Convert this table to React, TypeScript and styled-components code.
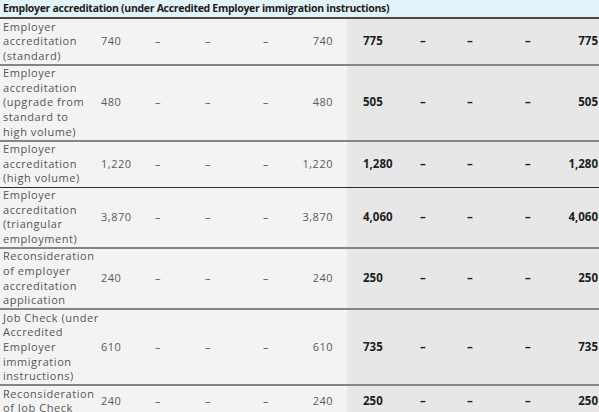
import styled, { createGlobalStyle } from "styled-components";

const GlobalStyle = createGlobalStyle`
  html, body {
    margin: 0;
    padding: 0;
    background: #ffffff;
  }
  body {
    font-family: "Open Sans", "Noto Sans", sans-serif;
    overflow: hidden;
  }
`;

type Fee = {
  label: string[];
  current: string;
  proposed: string;
  dark?: boolean;
};

const fees: Fee[] = [
  { label: ["Employer", "accreditation", "(standard)"], current: "740", proposed: "775" },
  {
    label: ["Employer", "accreditation", "(upgrade from", "standard to", "high volume)"],
    current: "480",
    proposed: "505",
  },
  { label: ["Employer", "accreditation", "(high volume)"], current: "1,220", proposed: "1,280", dark: true },
  {
    label: ["Employer", "accreditation", "(triangular", "employment)"],
    current: "3,870",
    proposed: "4,060",
  },
  {
    label: ["Reconsideration", "of employer", "accreditation", "application"],
    current: "240",
    proposed: "250",
  },
  {
    label: ["Job Check (under", "Accredited", "Employer", "immigration", "instructions)"],
    current: "610",
    proposed: "735",
  },
  { label: ["Reconsideration", "of Job Check"], current: "240", proposed: "250" },
];

const widths = [97, 54, 50, 58, 31, 57, 69, 47, 58, 34, 44];

function App() {
  return (
    <>
      <GlobalStyle />
      <FeeTable>
        <colgroup>
          {widths.map((w, i) => (
            <col key={i} style={{ width: w }} />
          ))}
        </colgroup>
        <thead>
          <tr>
            <SectionHead colSpan={11}>
              Employer accreditation (under Accredited Employer immigration instructions)
            </SectionHead>
          </tr>
        </thead>
        <tbody>
          {fees.map((fee, i) => (
            <tr key={i}>
              <LabelCell $dark={fee.dark}>
                {fee.label.map((l, j) => (
                  <div key={j}>{l}</div>
                ))}
              </LabelCell>
              <OldCell $dark={fee.dark}>{fee.current}</OldCell>
              <OldCell $dark={fee.dark}>–</OldCell>
              <OldCell $dark={fee.dark}>–</OldCell>
              <OldCell $dark={fee.dark}>–</OldCell>
              <OldCell $dark={fee.dark} $right>{fee.current}</OldCell>
              <NewCell $dark={fee.dark} $first>{fee.proposed}</NewCell>
              <NewCell $dark={fee.dark}>–</NewCell>
              <NewCell $dark={fee.dark}>–</NewCell>
              <NewCell $dark={fee.dark}>–</NewCell>
              <NewCell $dark={fee.dark} $right>{fee.proposed}</NewCell>
            </tr>
          ))}
        </tbody>
      </FeeTable>
    </>
  );
}

export default App;

const FeeTable = styled.table`
  width: 599px;
  table-layout: fixed;
  border-collapse: collapse;
  border-spacing: 0;
  font-size: 11px;
  line-height: 14.6px;
`;

const SectionHead = styled.th`
  background: #e2f2f9;
  color: #1c1c1c;
  font-size: 10.5px;
  letter-spacing: -0.3px;
  font-weight: 700;
  text-align: left;
  padding: 1px 3px 1px;
  height: 15px;
  white-space: nowrap;
  border-bottom: 2px solid #4a4a4a;
`;

const Cell = styled.td<{ $dark?: boolean }>`
  vertical-align: middle;
  padding: 0.5px 0 0.5px 4px;
  white-space: nowrap;
  border-bottom: ${(p) => (p.$dark ? "1.5px solid #2e2e2e" : "2px solid #858585")};
`;

const LabelCell = styled(Cell)`
  background: #f3f3f3;
  color: #555555;
  letter-spacing: 0.55px;
  padding-left: 3px;
`;

const OldCell = styled(Cell)<{ $right?: boolean }>`
  background: #f3f3f3;
  color: #5a5a5a;
  letter-spacing: 0.5px;
  text-align: ${(p) => (p.$right ? "right" : "left")};
  padding-right: ${(p) => (p.$right ? "14px" : "0")};
`;

const NewCell = styled(Cell)<{ $right?: boolean; $first?: boolean }>`
  background: #e7e7e7;
  color: #1e1e1e;
  font-size: 11.5px;
  font-weight: 700;
  text-align: ${(p) => (p.$right ? "right" : "left")};
  padding-left: ${(p) => (p.$first ? "16px" : "4px")};
  padding-right: ${(p) => (p.$right ? "1px" : "0")};
`;
